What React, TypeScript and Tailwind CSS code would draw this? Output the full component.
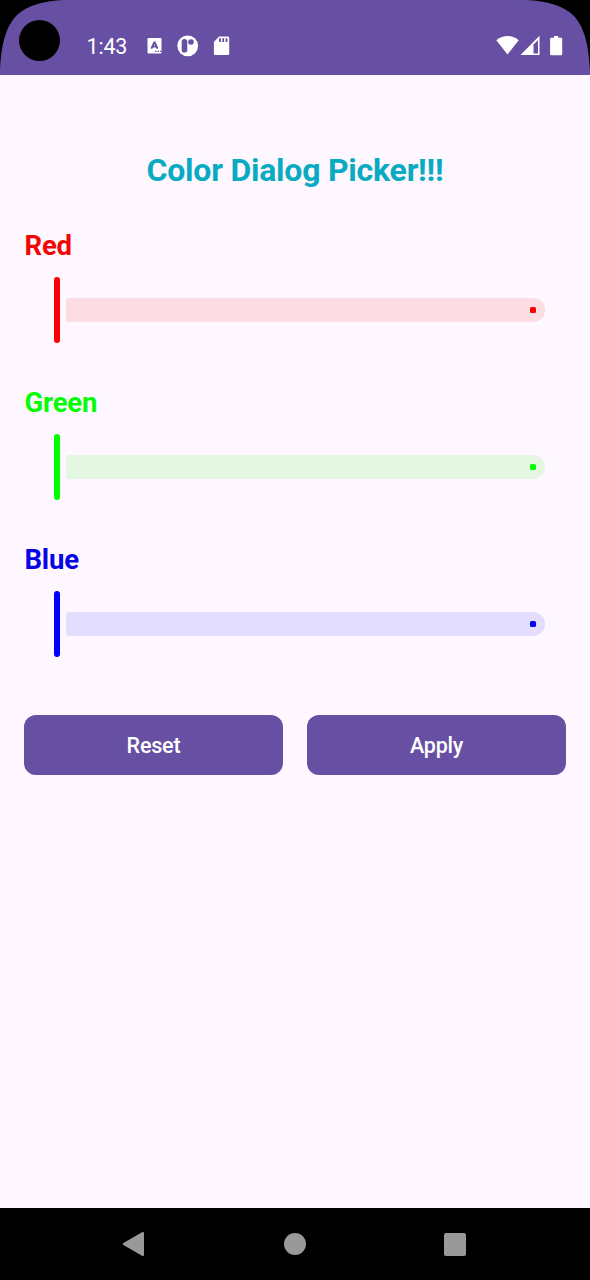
import React from "react";

type ChannelProps = {
  name: string;
  text: string;
  thumb: string;
  track: string;
};

const channels: ChannelProps[] = [
  { name: "Red", text: "text-[#f20505]", thumb: "bg-[#ff0000]", track: "bg-[#fcdde3]" },
  { name: "Green", text: "text-[#08fc08]", thumb: "bg-[#00ff00]", track: "bg-[#e3f7e3]" },
  { name: "Blue", text: "text-[#0404e6]", thumb: "bg-[#0000ff]", track: "bg-[#e3deff]" },
];

function StatusBar() {
  return (
    <header className="relative flex h-[74.5px] shrink-0 items-start bg-[#6750a4] text-white">
      <svg className="absolute left-0 top-0" width="66" height="74" viewBox="0 0 66 74">
        <path d="M0 0H64C42 1 27 6 17 15C7 25 1 42 0 72Z" fill="#000" />
      </svg>
      <svg className="absolute right-0 top-0" width="66" height="74" viewBox="0 0 66 74">
        <path d="M66 0H2C24 1 39 6 49 15C59 25 65 42 66 72Z" fill="#000" />
      </svg>
      <div className="relative ml-[19px] mt-5 size-[41px] rounded-full bg-black" />
      <span className="ml-[26.5px] mt-[33px] w-[59.5px] text-[21.5px] leading-[27px] tracking-[-0.2px]">1:43</span>
      <svg className="mt-[34px]" width="86" height="24" viewBox="0 0 86 24">
        <rect x="1.5" y="4" width="14" height="15.5" rx="1.2" fill="#fff" />
        <path d="M5.4 14.6L8.5 8L11.6 14.6M6.6 12.6H10.4" fill="none" stroke="#6750a4" strokeWidth="1.9" strokeLinejoin="bevel" />
        <path d="M9 17.3h1.4M11.5 17.3h1.4M13.8 17.3h1.4" stroke="#6750a4" strokeWidth="1.2" />
        <circle cx="41.7" cy="11.8" r="10.4" fill="#fff" />
        <rect x="35.7" y="5" width="5.6" height="13.5" rx="2.6" fill="#6750a4" />
        <circle cx="45" cy="8" r="2.8" fill="#6750a4" />
        <path d="M73 2.5H82Q83.2 2.5 83.2 3.7V19.8Q83.2 21 82 21H69.2Q67.9 21 67.9 19.8V8Z" fill="#fff" />
        <path d="M74 4.2v3.8M77.2 4.2v3.8M80.5 4.2v3.8" stroke="#6750a4" strokeWidth="1.8" />
      </svg>
      <svg className="ml-auto mr-[26px] mt-[34px]" width="68" height="24" viewBox="0 0 68 24">
        <path d="M.3 6.2Q11.5-2 22.7 6.2L11.5 20.5Z" fill="#fff" />
        <path d="M43.5 1.7V21H24.5ZM42 6L37.5 10.5V19.5H42Z" fill="#fff" fillRule="evenodd" />
        <path d="M58 2H62.3V3.8H65Q66.2 3.8 66.2 5V20Q66.2 21.2 65 21.2H55.3Q54.1 21.2 54.1 20V5Q54.1 3.8 55.3 3.8H58Z" fill="#fff" />
      </svg>
    </header>
  );
}

function Channel({ name, text, thumb, track }: ChannelProps) {
  return (
    <section className="mb-[43.75px]">
      <h2 className={`pl-[0.5px] text-[27.5px] font-bold leading-8 tracking-[-0.2px] ${text}`}>{name}</h2>
      <div className="mt-[15.25px] flex h-[66px] items-center gap-1.5 pl-[30px] pr-[21px]">
        <div className={`h-full w-1.5 rounded-full ${thumb}`} />
        <div className={`flex h-6 flex-1 items-center justify-end rounded-l-[3px] rounded-r-xl pr-[9px] ${track}`}>
          <div className={`size-1.5 rounded-[1.5px] ${thumb}`} />
        </div>
      </div>
    </section>
  );
}

function NavigationBar() {
  return (
    <nav className="flex h-[72px] shrink-0 items-center justify-between bg-black pl-[122px] pr-[124px]">
      <svg width="23" height="26" viewBox="0 0 23 26">
        <path d="M1.4 12L20 1.3Q22 .3 22 2.2V23.8Q22 25.7 20 24.7L1.4 14Q0 13 1.4 12Z" fill="#999" />
      </svg>
      <div className="size-[22px] rounded-full bg-[#999]" />
      <div className="h-[23px] w-[22px] rounded-[2px] bg-[#999]" />
    </nav>
  );
}

export default function App() {
  return (
    <div className="flex h-[1280px] w-[590px] flex-col overflow-hidden bg-[#fef7ff] font-['Roboto',sans-serif]">
      <StatusBar />
      <main className="flex-1 px-6 pt-[76px]">
        <h1 className="mb-[41px] text-center text-[32px] font-bold leading-[38px] tracking-[-0.23px] text-[#08abc1]">Color Dialog Picker!!!</h1>
        {channels.map((channel) => (
          <Channel key={channel.name} {...channel} />
        ))}
        <div className="mt-[57.75px] flex gap-6">
          <button className="h-[60px] flex-1 rounded-xl bg-[#6750a4] pt-[3px] text-[21.5px] font-medium tracking-[-0.2px] text-white">Reset</button>
          <button className="h-[60px] flex-1 rounded-xl bg-[#6750a4] pt-[3px] text-[21.5px] font-medium tracking-[-0.2px] text-white">Apply</button>
        </div>
      </main>
      <NavigationBar />
    </div>
  );
}
